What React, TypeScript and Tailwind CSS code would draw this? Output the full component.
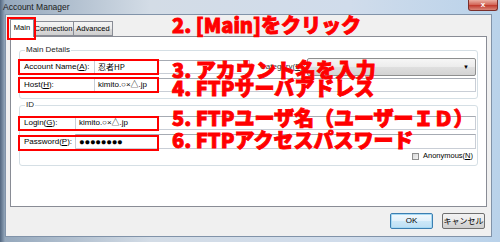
import React from "react";

const ui = "font-['Liberation_Sans','Noto_Sans_CJK_JP',sans-serif]";
const jp = "font-['Noto_Sans_CJK_JP',sans-serif]";

function Field({ children, className = "" }: { children?: React.ReactNode; className?: string }) {
  return (
    <div
      className={`flex h-[14px] items-center border border-[#c9ced6] border-t-[#a6abb3] bg-white pl-[3px] text-[8px] leading-none ${className}`}
    >
      {children}
    </div>
  );
}

function Note({ top, children }: { top: string; children: React.ReactNode }) {
  return (
    <div
      className={`absolute left-[172px] ${top} ${jp} text-[20px] leading-none font-black whitespace-nowrap text-[#ff0000] [-webkit-text-stroke:0.9px_#ff0000]`}
    >
      {children}
    </div>
  );
}

export default function App() {
  return (
    <div
      className={`relative flex h-[242px] w-[500px] flex-col overflow-hidden bg-[linear-gradient(90deg,#52667f_0px,#95a8bc_5px,#d3dce6_30%,#d0dceb_70%,#b9d2ea_100%)] ${ui} text-[8px] text-black`}
    >
      {/* title bar */}
      <div className="flex h-[14px] items-center pl-[3px] text-[8.5px] text-[#1a1a1a]">Account Manager</div>
      <div className="absolute top-0 right-[2px] flex h-[11px] w-[30px] items-center justify-center rounded-b-[3px] border border-t-0 border-[#7a2e2a] bg-[linear-gradient(180deg,#eab0a4_0%,#d46a5c_45%,#c23d30_55%,#d9877a_100%)] text-[8px] leading-none font-bold text-white">
        x
      </div>

      <div className="flex h-[223px]">
        <div className="w-[5px]" />
        <div className="flex h-[223px] w-[487px] flex-col border border-[#8193a9] bg-[#f0f0f0]">
          {/* tabs */}
          <div className="mt-[4px] ml-[4px] flex h-[17px] items-end text-[7.5px]">
            <div className="relative z-10 -mb-px flex h-[18px] w-[24px] items-center justify-center border border-b-0 border-[#898c95] bg-white pb-[2px]">
              Main
            </div>
            <div className="flex h-[15px] w-[40px] items-center justify-center border border-l-0 border-[#898c95] bg-[linear-gradient(180deg,#f4f4f4_0%,#ebebeb_50%,#dddddd_51%,#cfcfcf_100%)]">
              Connection
            </div>
            <div className="flex h-[15px] w-[39px] items-center justify-center border border-l-0 border-[#898c95] bg-[linear-gradient(180deg,#f4f4f4_0%,#ebebeb_50%,#dddddd_51%,#cfcfcf_100%)]">
              Advanced
            </div>
          </div>

          {/* panel */}
          <div className="ml-[4px] flex h-[171px] w-[477px] flex-col border border-[#898c95] bg-white px-[8px] pt-[8px]">
            <fieldset className="rounded-[3px] border border-[#d5dfe5] pr-[1px] pb-[6px] pl-[4px]">
              <legend className="ml-[1px] px-[1px] leading-[10px] text-[#1e1e1e]">Main Details</legend>
              <div className="mt-[3px] flex h-[18px] items-center">
                <div className="w-[70px]">
                  Account Name(<u>A</u>):
                </div>
                <Field className="w-[156px]">
                  <span className={jp}>忍者HP</span>
                </Field>
                <div className="ml-[10px] w-[47px] text-[#333]">
                  Category(<u>E</u>):
                </div>
                <div className="flex h-[18px] flex-1 items-center justify-end rounded-[2px] border border-[#8e8f8f] bg-[linear-gradient(180deg,#f6f6f6_0%,#ececec_50%,#dfdfdf_51%,#d3d3d3_100%)] pr-[6px]">
                  <span className="text-[6px] leading-none">▼</span>
                </div>
              </div>
              <div className="mt-[2px] flex items-center">
                <div className="w-[70px]">
                  Host(<u>H</u>):
                </div>
                <Field className="flex-1">
                  <span>kimito.○×△.jp</span>
                </Field>
              </div>
            </fieldset>

            <fieldset className="mt-[1px] rounded-[3px] border border-[#d5dfe5] pr-[1px] pb-[5px] pl-[4px]">
              <legend className="ml-[1px] px-[1px] leading-[10px] text-[#1e1e1e]">ID</legend>
              <div className="mt-[6px] flex items-center">
                <div className="w-[51px]">
                  Login(<u>G</u>):
                </div>
                <Field className="flex-1">
                  <span>kimito.○×△.jp</span>
                </Field>
              </div>
              <div className="mt-[4px] flex items-center">
                <div className="w-[51px]">
                  Password(<u>P</u>):
                </div>
                <Field className="h-[15px] flex-1">
                  <span className="text-[9.5px] tracking-[-0.3px]">●●●●●●●●</span>
                </Field>
              </div>
              <div className="mt-[3px] flex h-[8px] items-center justify-end pr-[3px]">
                <div className="mr-[4px] h-[7px] w-[7px] border border-[#8f8f8f] bg-[linear-gradient(135deg,#d8d8d8,#f4f4f4)]" />
                <span className="text-[7.5px] leading-none">
                  Anonymous(<u>N</u>)
                </span>
              </div>
            </fieldset>
          </div>

          {/* buttons */}
          <div className="mt-[6px] flex justify-end gap-[9px] pr-[6px]">
            <div className="flex h-[16px] w-[43px] items-center justify-center rounded-[2px] border border-[#3c7fb1] bg-[linear-gradient(180deg,#f2f9fd_0%,#e2f1fb_50%,#cde8f8_51%,#bddff4_100%)] shadow-[inset_0_0_0_1px_#a6d9f4]">
              OK
            </div>
            <div className="flex h-[16px] w-[43px] items-center justify-center rounded-[2px] border border-[#707070] bg-[linear-gradient(180deg,#f2f2f2_0%,#ebebeb_50%,#dddddd_51%,#cfcfcf_100%)]">
              <span className={jp}>キャンセル</span>
            </div>
          </div>
        </div>
      </div>

      {/* annotations */}
      <div className="absolute top-[17px] left-[7px] h-[23px] w-[29px] border-2 border-[#ff0000]" />
      <div className="absolute top-[59px] left-[18px] h-[16px] w-[141px] border-2 border-[#ff0000]" />
      <div className="absolute top-[77px] left-[18px] h-[16px] w-[141px] border-2 border-[#ff0000]" />
      <div className="absolute top-[116px] left-[18px] h-[15px] w-[141px] border-2 border-[#ff0000]" />
      <div className="absolute top-[135px] left-[18px] h-[16px] w-[141px] border-2 border-[#ff0000]" />

      <Note top="top-[15px]">2. [Main]をクリック</Note>
      <Note top="top-[60px]">3. アカウント名を入力</Note>
      <Note top="top-[78px]">4. FTPサーバアドレス</Note>
      <Note top="top-[108px]">5. FTPユーザ名（ユーザーＩＤ）</Note>
      <Note top="top-[130px]">6. FTPアクセスパスワード</Note>
    </div>
  );
}
